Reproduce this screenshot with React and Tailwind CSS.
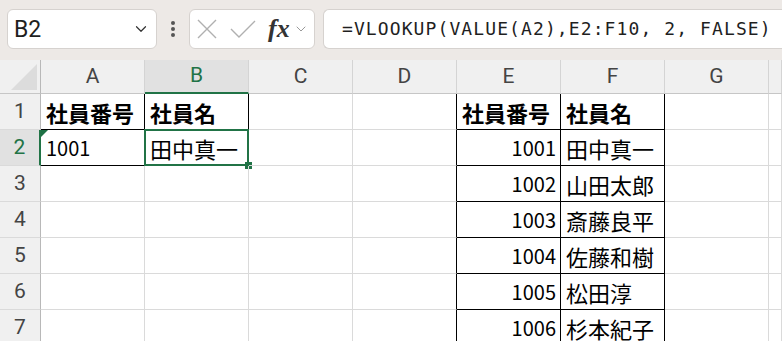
import React from 'react';
import { ChevronDown } from 'lucide-react';

const COLS = ['A', 'B', 'C', 'D', 'E', 'F', 'G', ''];

const DATA = {
  '1-0': { v: '社員番号', bold: true },
  '1-1': { v: '社員名', bold: true },
  '2-0': { v: '1001', flag: true, num: true },
  '2-1': { v: '田中真一' },
  '1-4': { v: '社員番号', bold: true },
  '1-5': { v: '社員名', bold: true },
  '2-4': { v: '1001', right: true, num: true },
  '3-4': { v: '1002', right: true, num: true },
  '4-4': { v: '1003', right: true, num: true },
  '5-4': { v: '1004', right: true, num: true },
  '6-4': { v: '1005', right: true, num: true },
  '7-4': { v: '1006', right: true, num: true },
  '2-5': { v: '田中真一' },
  '3-5': { v: '山田太郎' },
  '4-5': { v: '斎藤良平' },
  '5-5': { v: '佐藤和樹' },
  '6-5': { v: '松田淳' },
  '7-5': { v: '杉本紀子' },
};

// cells that carry a thin black border
const boxed = (r, c) => {
  if (r >= 1 && r <= 2 && c >= 0 && c <= 1) return true;
  if (r >= 1 && r <= 8 && c >= 4 && c <= 5) return true;
  return false;
};

const Cell = ({ r, c }) => {
  const d = DATA[`${r}-${c}`];
  const right = boxed(r, c) || boxed(r, c + 1);
  const bottom = boxed(r, c) || boxed(r + 1, c);
  const selected = r === 2 && c === 1;
  return (
    <div
      className={`relative flex items-center border-r border-b ${right ? 'border-r-black' : 'border-r-[#dadada]'} ${bottom ? 'border-b-black' : 'border-b-[#dadada]'} ${d && d.right ? 'justify-end pr-[4px]' : 'pl-[5px]'}`}
    >
      {d && (
        <span
          className={`leading-none text-black whitespace-nowrap ${d.num ? 'text-[20px]' : 'text-[22px]'} ${d.bold ? 'font-bold' : 'font-normal'}`}
          style={{ fontFamily: '"Noto Sans CJK JP", "Noto Sans", sans-serif' }}
        >
          {d.v}
        </span>
      )}
      {d && d.flag && (
        <div className="absolute top-0 left-0 w-0 h-0 border-t-[7px] border-t-[#1e7145] border-r-[7px] border-r-transparent" />
      )}
      {selected && (
        <>
          <div className="absolute -top-[1px] -left-[1px] -right-[1px] -bottom-[1px] border-2 border-[#217346]" />
          <div className="absolute -right-[4px] -bottom-[4px] w-[7px] h-[7px] bg-[#217346]" />
        </>
      )}
    </div>
  );
};

export default function App() {
  const rows = [1, 2, 3, 4, 5, 6, 7];
  return (
    <div className="w-[782px] h-[341px] overflow-hidden bg-white" style={{ fontFamily: 'Roboto, "Liberation Sans", sans-serif' }}>
      {/* formula bar */}
      <div className="h-[60px] bg-[#ede9e6] flex items-start pt-[9px] pl-[7px] gap-[8px]">
        <div className="w-[150px] h-[40px] bg-white border border-[#d6d2cf] rounded-[6px] flex items-center justify-between pl-[6px] pr-[6px]">
          <span className="text-[23px] text-[#1f1f1f] leading-none">B2</span>
          <ChevronDown className="w-[18px] h-[18px] text-[#333]" strokeWidth={1.6} />
        </div>
        <div className="h-[40px] flex flex-col justify-center items-center gap-[2px] w-[16px]">
          <div className="w-[4px] h-[4px] rounded-full bg-[#555]" />
          <div className="w-[4px] h-[4px] rounded-full bg-[#555]" />
          <div className="w-[4px] h-[4px] rounded-full bg-[#555]" />
        </div>
        <div className="w-[126px] h-[40px] bg-white border border-[#d6d2cf] rounded-[6px] flex items-center pl-[7px] pr-[2px]">
          <svg width="20" height="20" viewBox="0 0 20 20" className="shrink-0">
            <path d="M1 1 L19 19 M19 1 L1 19" stroke="#b0b0b0" strokeWidth="1.4" fill="none" />
          </svg>
          <svg width="26" height="18" viewBox="0 0 26 18" className="ml-[13px] shrink-0">
            <path d="M1 9 L9 17 L25 1" stroke="#b0b0b0" strokeWidth="1.4" fill="none" />
          </svg>
          <span
            className="ml-[12px] text-[26px] italic font-bold text-[#333] leading-none"
            style={{ fontFamily: '"Liberation Serif", serif' }}
          >
            fx
          </span>
          <ChevronDown className="w-[16px] h-[16px] ml-[3px] text-[#999]" strokeWidth={1.5} />
        </div>
        <div className="flex-1 h-[40px] bg-white border border-[#d6d2cf] border-r-0 rounded-l-[6px] flex items-center pl-[18px]">
          <span
            className="text-[18px] tracking-[1.1px] text-[#1f1f1f] whitespace-nowrap leading-none"
            style={{ fontFamily: '"DejaVu Sans Mono", "Liberation Mono", monospace' }}
          >
            =VLOOKUP(VALUE(A2),E2:F10, 2, FALSE)
          </span>
        </div>
      </div>

      {/* sheet */}
      <div className="grid grid-cols-[41px_repeat(7,104px)_1fr] grid-rows-[34px_repeat(7,36px)]">
        {/* corner */}
        <div className="relative bg-[#f0f0f0] border-r border-b border-r-[#b8b8b8] border-b-[#c6c6c6]">
          <div className="absolute right-[3px] bottom-[3px] w-0 h-0 border-b-[26px] border-b-[#dcdcdc] border-l-[26px] border-l-transparent" />
        </div>
        {COLS.map((c, i) =>
          i === 1 ? (
            <div key={i} className="flex items-center justify-center bg-[#e1e1e1] border-r border-r-[#d4d4d4] border-b-2 border-b-[#217346] text-[21px] text-[#217346]">
              {c}
            </div>
          ) : (
            <div key={i} className="flex items-center justify-center bg-[#f0f0f0] border-r border-r-[#d4d4d4] border-b border-b-[#c6c6c6] text-[21px] text-[#444]">
              {c}
            </div>
          )
        )}
        {rows.map((r) => (
          <React.Fragment key={r}>
            {r === 2 ? (
              <div className="flex items-center justify-center bg-[#e1e1e1] border-r-2 border-r-[#217346] border-b border-b-[#dadada] text-[21px] text-[#217346]">
                {r}
              </div>
            ) : (
              <div className="flex items-center justify-center bg-[#f0f0f0] border-r border-r-[#b8b8b8] border-b border-b-[#dadada] text-[21px] text-[#444]">
                {r}
              </div>
            )}
            {COLS.map((_, c) => (
              <Cell key={c} r={r} c={c} />
            ))}
          </React.Fragment>
        ))}
      </div>
    </div>
  );
}
